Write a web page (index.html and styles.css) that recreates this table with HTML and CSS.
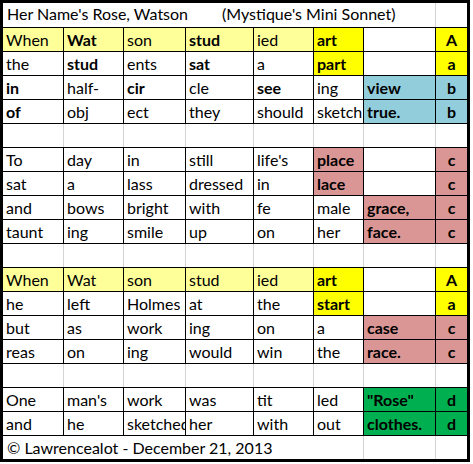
FILE: index.html
```html
<!DOCTYPE html>
<html>
<head>
<meta charset="utf-8">
<link rel="stylesheet" href="styles.css">
</head>
<body>
<div class="sheet">
  <div class="band title-band">
    <div class="cell title span7"><span>Her Name's Rose, Watson</span><span class="sub">(Mystique's Mini Sonnet)</span></div>
    <div class="cell"></div>
  </div>

  <div class="cell ly">When</div><div class="cell ly b">Wat</div><div class="cell ly">son</div><div class="cell ly b">stud</div><div class="cell ly">ied</div><div class="cell y b">art</div><div class="cell"></div><div class="cell y b c">A</div>
  <div class="cell">the</div><div class="cell b">stud</div><div class="cell">ents</div><div class="cell b">sat</div><div class="cell">a</div><div class="cell y b">part</div><div class="cell"></div><div class="cell y b c">a</div>
  <div class="cell b">in</div><div class="cell">half-</div><div class="cell b">cir</div><div class="cell">cle</div><div class="cell b">see</div><div class="cell">ing</div><div class="cell bl b">view</div><div class="cell bl b c">b</div>
  <div class="cell b">of</div><div class="cell">obj</div><div class="cell">ect</div><div class="cell">they</div><div class="cell">should</div><div class="cell">sketch</div><div class="cell bl b">true.</div><div class="cell bl b c">b</div>

  <div class="band spacer"><div></div><div></div><div></div><div></div><div></div><div></div><div></div><div></div></div>

  <div class="cell">To</div><div class="cell">day</div><div class="cell">in</div><div class="cell">still</div><div class="cell">life's</div><div class="cell pk b">place</div><div class="cell"></div><div class="cell pk b c">c</div>
  <div class="cell">sat</div><div class="cell">a</div><div class="cell">lass</div><div class="cell">dressed</div><div class="cell">in</div><div class="cell pk b">lace</div><div class="cell"></div><div class="cell pk b c">c</div>
  <div class="cell">and</div><div class="cell">bows</div><div class="cell">bright</div><div class="cell">with</div><div class="cell">fe</div><div class="cell">male</div><div class="cell pk b">grace,</div><div class="cell pk b c">c</div>
  <div class="cell">taunt</div><div class="cell">ing</div><div class="cell">smile</div><div class="cell">up</div><div class="cell">on</div><div class="cell">her</div><div class="cell pk b">face.</div><div class="cell pk b c">c</div>

  <div class="band spacer"><div></div><div></div><div></div><div></div><div></div><div></div><div></div><div></div></div>

  <div class="cell ly">When</div><div class="cell ly">Wat</div><div class="cell ly">son</div><div class="cell ly">stud</div><div class="cell ly">ied</div><div class="cell y b">art</div><div class="cell"></div><div class="cell y b c">A</div>
  <div class="cell">he</div><div class="cell">left</div><div class="cell">Holmes</div><div class="cell">at</div><div class="cell">the</div><div class="cell y b">start</div><div class="cell"></div><div class="cell y b c">a</div>
  <div class="cell">but</div><div class="cell">as</div><div class="cell">work</div><div class="cell">ing</div><div class="cell">on</div><div class="cell">a</div><div class="cell pk b">case</div><div class="cell pk b c">c</div>
  <div class="cell">reas</div><div class="cell">on</div><div class="cell">ing</div><div class="cell">would</div><div class="cell">win</div><div class="cell">the</div><div class="cell pk b">race.</div><div class="cell pk b c">c</div>

  <div class="band spacer"><div></div><div></div><div></div><div></div><div></div><div></div><div></div><div></div></div>

  <div class="cell">One</div><div class="cell">man's</div><div class="cell">work</div><div class="cell">was</div><div class="cell">tit</div><div class="cell">led</div><div class="cell gr b">"Rose"</div><div class="cell gr b c">d</div>
  <div class="cell">and</div><div class="cell">he</div><div class="cell">sketched</div><div class="cell">her</div><div class="cell">with</div><div class="cell">out</div><div class="cell gr b">clothes.</div><div class="cell gr b c">d</div>

  <div class="band foot-band">
    <div class="cell span6">© Lawrencealot - December 21, 2013</div>
    <div class="cell"></div>
    <div class="cell"></div>
  </div>
</div>
</body>
</html>
```

FILE: styles.css
```css
html, body {
  margin: 0;
  padding: 0;
  background: #ffffff;
}

.sheet {
  display: grid;
  grid-template-columns: 60px 59px 61px 67px 59px 49px 71px 31px;
  grid-template-rows: 24px repeat(18, 23px);
  gap: 1px;
  width: max-content;
  background: #000000;
  border: 3px solid #000000;
  font-family: Lato, "Liberation Sans", sans-serif;
  font-size: 16px;
  color: #000000;
}

.cell {
  background: #ffffff;
  padding: 0 0 0 3px;
  line-height: 23px;
  white-space: nowrap;
  overflow: hidden;
}

.band {
  grid-column: 1 / -1;
  display: grid;
  grid-template-columns: 60px 59px 61px 67px 59px 49px 71px 31px;
  gap: 1px;
  background: #d4d4d4;
}

.spacer > div {
  background: #ffffff;
}

.title {
  line-height: 22px;
  padding-left: 4px;
}

.title .sub {
  margin-left: 34px;
}

.span7 { grid-column: 1 / 8; }
.span6 { grid-column: 1 / 7; padding-left: 4px; }

.b { font-weight: 700; }
.c { text-align: center; padding-left: 0; }

.ly { background: #ffff99; }
.y { background: #ffff00; }
.bl { background: #92cddc; }
.pk { background: #da9694; }
.gr { background: #00b050; }
```
